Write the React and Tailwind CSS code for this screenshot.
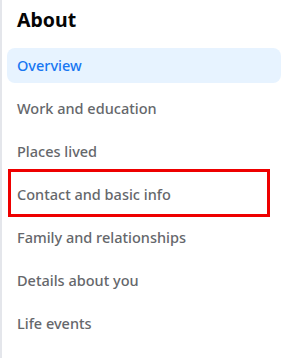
const items = [
  'Overview',
  'Work and education',
  'Places lived',
  'Contact and basic info',
  'Family and relationships',
  'Details about you',
  'Life events',
];

export default function App() {
  return (
    <div
      className="h-[358px] w-[287px] bg-white border-l-2 border-[#e4e6eb] overflow-hidden"
      style={{ fontFamily: '"Noto Sans", "Open Sans", sans-serif' }}
    >
      <div className="pl-[15px] pt-[6px] h-[48px]">
        <h2 className="text-[19.5px] leading-[28px] font-bold text-[#050505]">About</h2>
      </div>
      <ul className="flex flex-col gap-[8px] pl-[5px] pr-[6px]">
        {items.map((label, i) => (
          <li
            key={label}
            className={
              i === 0
                ? 'relative h-[35px] flex items-center pl-[10px] rounded-lg bg-[#e7f3ff] text-[#1877f2] text-[14.5px] font-medium'
                : 'relative h-[35px] flex items-center pl-[10px] rounded-lg text-[#65676b] text-[14.5px] font-medium'
            }
          >
            {label}
            {label === 'Contact and basic info' && (
              <span className="absolute left-[1px] right-[11px] top-[-8px] bottom-[-5px] border-[3px] border-[#ee0000] pointer-events-none" />
            )}
          </li>
        ))}
      </ul>
    </div>
  );
}
